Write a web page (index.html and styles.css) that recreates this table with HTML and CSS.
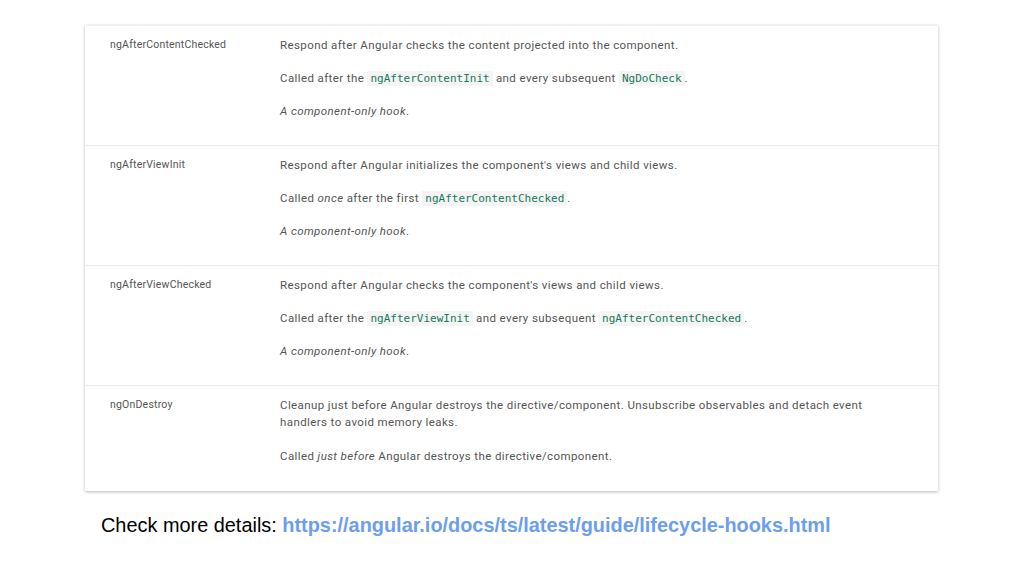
FILE: index.html
```html
<!DOCTYPE html>
<html lang="en">
<head>
  <meta charset="UTF-8">
  <title>Lifecycle hooks</title>
  <link rel="stylesheet" href="styles.css">
</head>
<body>
  <!-- Hook table -->
  <div class="card">
    <div class="row">
      <div class="hook">ngAfterContentChecked</div>
      <div class="desc">
        <p>Respond after Angular checks the content projected into the component.</p>
        <p>Called after the <code>ngAfterContentInit</code> and every subsequent <code>NgDoCheck</code>.</p>
        <p><em>A component-only hook</em>.</p>
      </div>
    </div>
    <div class="row">
      <div class="hook">ngAfterViewInit</div>
      <div class="desc">
        <p>Respond after Angular initializes the component's views and child views.</p>
        <p>Called <em>once</em> after the first <code>ngAfterContentChecked</code>.</p>
        <p><em>A component-only hook</em>.</p>
      </div>
    </div>
    <div class="row">
      <div class="hook">ngAfterViewChecked</div>
      <div class="desc">
        <p>Respond after Angular checks the component's views and child views.</p>
        <p>Called after the <code>ngAfterViewInit</code> and every subsequent <code>ngAfterContentChecked</code>.</p>
        <p><em>A component-only hook</em>.</p>
      </div>
    </div>
    <div class="row last">
      <div class="hook">ngOnDestroy</div>
      <div class="desc">
        <p>Cleanup just before Angular destroys the directive/component. Unsubscribe observables and detach event handlers to avoid memory leaks.</p>
        <p>Called <em>just before</em> Angular destroys the directive/component.</p>
      </div>
    </div>
  </div>

  <!-- Footer note -->
  <p class="note">Check more details: <a href="https://angular.io/docs/ts/latest/guide/lifecycle-hooks.html">https://angular.io/docs/ts/latest/guide/lifecycle-hooks.html</a></p>
</body>
</html>
```
FILE: styles.css
```css
body {
  margin: 0;
  padding: 25px 0 0;
  background: #fff;
  font-family: Roboto, "Liberation Sans", sans-serif;
  color: #555;
}
.card {
  width: 853px;
  margin-left: 85px;
  background: #fff;
  border-top: 1px solid #f0f0f0;
  box-shadow: 0 1px 3px rgba(0, 0, 0, 0.28);
}
.row {
  display: flex;
  height: 120px;
  border-bottom: 1px solid #ebebeb;
  box-sizing: border-box;
}
.row.last {
  height: 105px;
  border-bottom: none;
}
.hook {
  width: 170px;
  padding: 10px 0 0 25px;
  font-size: 10.5px;
  line-height: 17px;
  letter-spacing: 0.2px;
  color: #555;
}
.desc {
  flex: 1;
  padding: 11px 50px 0 0;
  font-size: 11.5px;
  line-height: 17px;
  letter-spacing: 0.4px;
}
.desc p {
  margin: 0 0 16px;
}
.row.last .desc p:first-child {
  margin-bottom: 17px;
}
code {
  font-family: "DejaVu Sans Mono", monospace;
  font-size: 11px;
  letter-spacing: 0;
  color: #17795e;
  background: #f4f4f4;
  padding: 1px 3px;
}
.note {
  margin: 23px 0 0 101px;
  font-family: "Liberation Sans", Arial, sans-serif;
  font-size: 19.9px;
  color: #000;
}
.note a {
  color: #6d9eeb;
  font-weight: bold;
  text-decoration: none;
}
```
